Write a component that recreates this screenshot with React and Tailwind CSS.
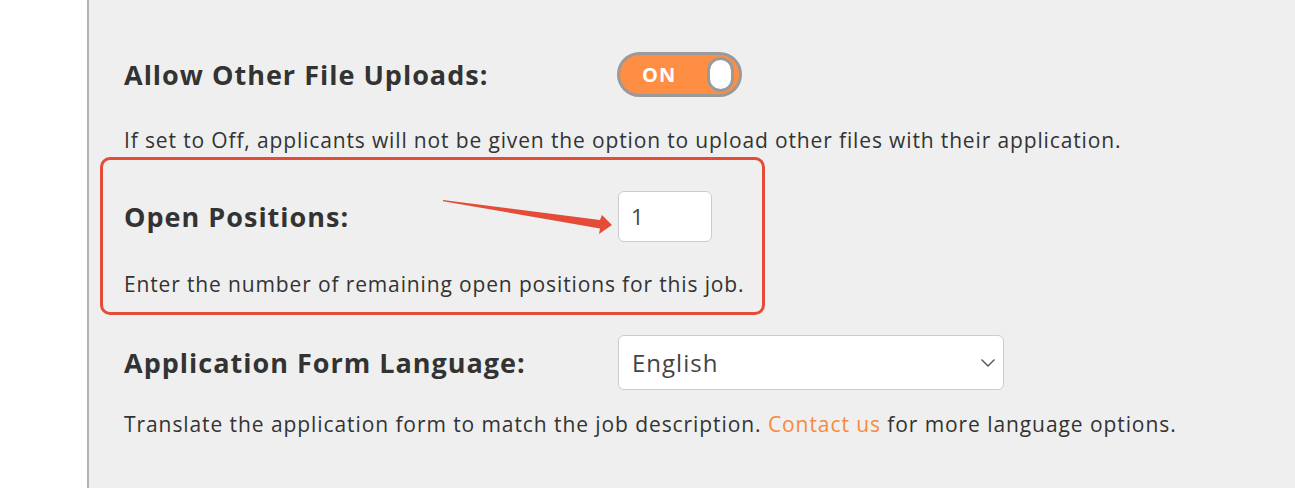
export default function App() {
  const font = { fontFamily: '"Open Sans", "Lato", sans-serif' };
  return (
    <div className="flex w-[1295px] h-[488px] overflow-hidden bg-white" style={font}>
      <div className="w-[87px] shrink-0 bg-white" />
      <div className="relative flex-1 bg-[#efefef] border-l-2 border-[#b3b3b3] pl-[35px] text-[#333333]">
        <div className="mt-[52px] h-[45px] flex items-center">
          <div className="w-[494px] text-[27px] font-bold leading-none tracking-[1px]">Allow Other File Uploads:</div>
          <div className="relative w-[125px] h-[45px] rounded-full bg-[#ff8e45] border-[3px] border-[#9a9a9a] -ml-[1px]">
            <span className="absolute left-[22px] top-[7px] text-white font-bold text-[20px] leading-[25px] tracking-[1px]">ON</span>
            <div className="absolute right-[5px] top-[2px] w-[27px] h-[35px] rounded-full bg-white border-[3px] border-[#9a9a9a]" />
          </div>
        </div>
        <div className="mt-[29px] text-[21px] leading-[28px] tracking-[0.86px]">
          If set to Off, applicants will not be given the option to upload other files with their application.
        </div>
        <div className="mt-[37px] h-[51px] flex items-center">
          <div className="w-[494px] text-[27px] font-bold leading-none tracking-[1px]">Open Positions:</div>
          <div className="w-[94px] h-[51px] rounded-[6px] bg-white border border-[#cccccc] flex items-center pl-[12px] text-[22px] text-[#444]">1</div>
        </div>
        <div className="mt-[28px] text-[21px] leading-[28px] tracking-[0.86px]">
          Enter the number of remaining open positions for this job.
        </div>
        <div className="mt-[37px] h-[55px] flex items-center">
          <div className="w-[494px] text-[27px] font-bold leading-none tracking-[1px]">Application Form Language:</div>
          <div className="relative w-[386px] h-[55px] rounded-[6px] bg-white border border-[#cccccc] flex items-center pl-[13px] text-[24px] tracking-[1px] text-[#444]">
            English
            <svg className="absolute right-[7px] top-[22px]" width="16" height="10" viewBox="0 0 16 10">
              <path d="M1.5 1.5 L8 8 L14.5 1.5" fill="none" stroke="#555" strokeWidth="1.4" />
            </svg>
          </div>
        </div>
        <div className="mt-[20px] text-[21px] leading-[28px] tracking-[0.92px]">
          Translate the application form to match the job description.{" "}
          <span className="text-[#f78a3d]">Contact us</span> for more language options.
        </div>

        <div className="absolute left-[11px] top-[157px] w-[665px] h-[158px] rounded-[10px] border-[3px] border-[#e44c38] pointer-events-none" />
        <svg className="absolute left-[0px] top-[0px] pointer-events-none" width="700" height="260" viewBox="89 0 700 260">
          <polygon points="443,200 443,201.2 600,228.5 599,234 612,225 602,215 600,220" fill="#e44c38" />
        </svg>
      </div>
    </div>
  );
}
